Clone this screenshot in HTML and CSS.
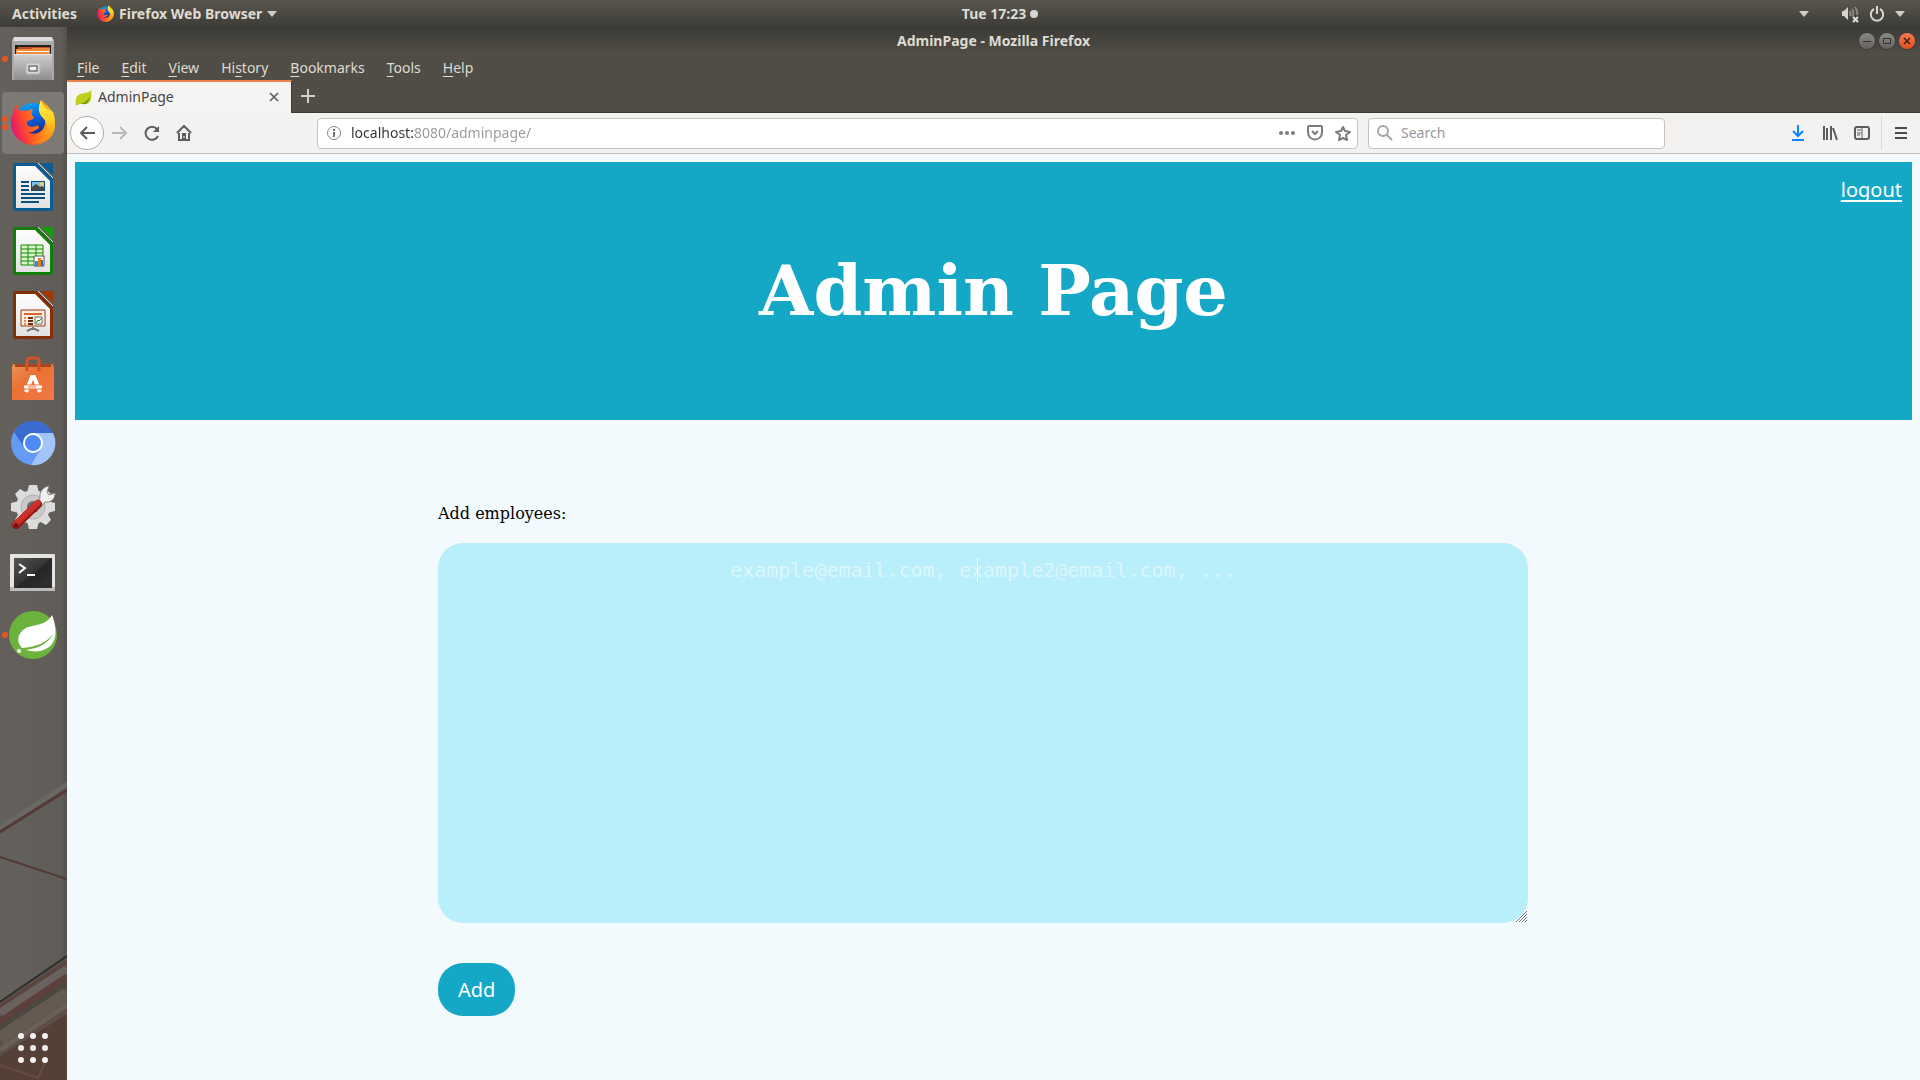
FILE: index.html
```html
<!DOCTYPE html>
<html lang="en">
<head>
<meta charset="utf-8">
<title>AdminPage</title>
<link rel="stylesheet" href="styles.css">
</head>
<body>
<svg class="defs" width="0" height="0" aria-hidden="true">
  <defs>
    <linearGradient id="fox" x1="0" y1="0.6" x2="1" y2="0.3"><stop offset="0" stop-color="#e2156f"/><stop offset="0.3" stop-color="#ff4b2b"/><stop offset="0.65" stop-color="#ff8a16"/><stop offset="1" stop-color="#ffc01f"/></linearGradient>
    <linearGradient id="flame" x1="0.4" y1="0" x2="0.5" y2="1"><stop offset="0" stop-color="#fff44f"/><stop offset="0.5" stop-color="#ffcf1e"/><stop offset="1" stop-color="#ff7a1a"/></linearGradient>
    <linearGradient id="globe" x1="0.3" y1="0" x2="0.6" y2="1"><stop offset="0" stop-color="#0aa5f5"/><stop offset="0.5" stop-color="#0a5fd8"/><stop offset="1" stop-color="#2b1a78"/></linearGradient>
    <linearGradient id="metal" x1="0" y1="0" x2="0" y2="1"><stop offset="0" stop-color="#d0d0d0"/><stop offset="1" stop-color="#8f8f8f"/></linearGradient>
    <linearGradient id="paper" x1="0" y1="0" x2="0" y2="1"><stop offset="0" stop-color="#ffffff"/><stop offset="1" stop-color="#e2e2e2"/></linearGradient>
    <linearGradient id="bag" x1="0" y1="0" x2="1" y2="1"><stop offset="0" stop-color="#e89558"/><stop offset="0.4" stop-color="#ec7034"/><stop offset="1" stop-color="#f07a45"/></linearGradient>
    <linearGradient id="screen" x1="0" y1="0" x2="1" y2="1"><stop offset="0" stop-color="#555"/><stop offset="0.5" stop-color="#333"/><stop offset="0.52" stop-color="#262626"/><stop offset="1" stop-color="#303030"/></linearGradient>
    <linearGradient id="handle" x1="0" y1="0" x2="1" y2="1"><stop offset="0" stop-color="#e84a3c"/><stop offset="1" stop-color="#a81515"/></linearGradient>
    <symbol id="firefox" viewBox="8 7 46 46">
      <circle cx="31" cy="28" r="17" fill="url(#globe)"/>
      <path fill="url(#fox)" d="M15 13c0 3 1 5 3 6 3-1 6-1 8 0 2-2 4-2 5-2-1 2-2 4-1 6l2 3c-2 2-5 2-7 4-1 2 1 4 4 5 3 0 5-2 7-1 2 1 1 3-1 3-3 2-5 4-9 3 4 3 12 2 15-3 4-6 2-12-1-15-4-5-2-11-1-14 6 5 13 10 14 23 1 13-10 22-22 22S9 43 9 31c0-5 1-9 3-12 0-3 1-5 3-6z"/>
      <path fill="url(#flame)" d="M39 8c1 5 4 7 7 10 1-1 3 0 5 2 3 8 3 18-4 25-5 5-12 7-18 6 10-2 17-8 16-16 0-5-2-7-5-10-5-6-3-12-1-17z"/>
    </symbol>
    <symbol id="leaf" viewBox="0 0 18 18"><path fill="#c0cf1d" d="M17 1c1 9 0 15-7 15-3 0-6 0-9 1 0-3-1-6 1-9 3-5 11-2 15-7z"/><path fill="#6e9a1b" d="M1 16c6 1 11-2 15-8-1 6-4 9-8 8-3 0-5 0-7 1z"/></symbol>
  </defs>
</svg>

<header class="topbar">
  <div class="topbar-left">
    <button class="panel-button" type="button">Activities</button>
    <button class="panel-button app-menu" type="button"><svg width="17" height="17"><use href="#firefox"/></svg>Firefox Web Browser<svg width="10" height="6"><path d="M0 0h10L5 6z" fill="#d0cfcc"/></svg></button>
  </div>
  <button class="panel-button clock" type="button">Tue 17:23<span class="clock-dot"></span></button>
  <div class="topbar-right">
    <button class="panel-button" type="button" aria-label="Input menu"><svg width="10" height="6"><path d="M0 0h10L5 6z" fill="#d0cfcc"/></svg></button>
    <button class="panel-button status" type="button" aria-label="System menu">
      <svg width="18" height="18"><path d="M1 6h2l4-4v13l-4-4H1z" fill="#d6d5d1"/><g fill="none" stroke="#8b8983" stroke-width="2"><path d="M9 6q1 3 0 5M11 4q3 5 0 7M14 2q3 4 2 8"/></g><path d="M12 12l5 5m0-5l-5 5" stroke="#e2e1dd" stroke-width="2"/></svg>
      <svg width="16" height="18"><path d="M5 4a6.200 6.200 0 1 0 6 0" fill="none" stroke="#d6d5d1" stroke-width="2"/><path d="M8 1v8" stroke="#d6d5d1" stroke-width="2"/></svg>
      <svg width="10" height="6"><path d="M0 0h10L5 6z" fill="#d0cfcc"/></svg>
    </button>
  </div>
</header>

<nav class="dock" aria-label="Dock">
  <svg class="wallpaper" width="67" height="300" viewBox="0 0 67 300">
    <path d="M0 48L67 4" stroke="#6b6763" stroke-width="5"/>
    <path d="M0 52L67 10" stroke="#55393a" stroke-width="3"/>
    <path d="M0 77l67 22" stroke="#54393a" stroke-width="2"/>
    <path d="M0 224l67-46v122H0z" fill="#5d4e47"/>
    <path d="M0 222l67-46" stroke="#2f2d2b" stroke-width="2"/>
    <path d="M0 226l67-44" stroke="#5b443d" stroke-width="3"/>
    <path d="M0 233l67-44" stroke="#6a625f" stroke-width="8"/>
    <path d="M0 242l67-45" stroke="#5c403b" stroke-width="7"/>
    <path d="M0 248l67-44" stroke="#4a4840" stroke-width="6"/>
    <path d="M0 258l67-44" stroke="#655a51" stroke-width="13"/>
    <path d="M0 270l67-45" stroke="#6a6059" stroke-width="5"/>
    <path d="M0 276l67-42v66H0z" fill="#554037"/>
    <path d="M0 285l38 13 7-16" fill="none" stroke="#694b45" stroke-width="2"/>
  </svg>
  <button class="dock-item" type="button" aria-label="Files"><svg viewBox="0 0 62 62">
    <circle cx="3" cy="31" r="3" fill="#e95420"/>
    <path d="M12 9h38l2 4v38q0 1-1 1H11q-1 0-1-1V13z" fill="#aaa"/><path d="M12 9h38l1 4H11z" fill="#dcdcdc"/>
    <path d="M13 17h36v11H13z" fill="#22201e"/><path d="M16 19h32v8H14z" fill="#c04a20"/><path d="M14 21h16v-1h18v7H14z" fill="#f08b3e"/><path d="M15 23h32v1H15z" fill="#fff"/>
    <path d="M12 26h38v26H12z" fill="url(#metal)"/><path d="M12 26h38v1H12z" fill="#e4e4e4"/>
    <rect x="24" y="35" width="14" height="11" rx="2" fill="#d7d7d7" stroke="#b5b5b5"/><rect x="27" y="38" width="8" height="5" fill="#eee" stroke="#444"/>
  </svg></button>
  <button class="dock-item active" type="button" aria-label="Firefox Web Browser"><svg viewBox="0 0 62 62">
    <circle cx="3" cy="27" r="3" fill="#e95420"/><circle cx="3" cy="35" r="3" fill="#e95420"/>
    <use href="#firefox" x="8" y="7" width="46" height="46"/>
  </svg></button>
  <button class="dock-item" type="button" aria-label="LibreOffice Writer"><svg viewBox="0 0 62 62">
    <path d="M13 7h22l16 16v30q0 2-2 2H13q-2 0-2-2V9q0-2 2-2z" fill="#0a5c93"/><path d="M38 7h13v12z" fill="#0a5c93"/><path d="M14 10h19l15 15v27H14z" fill="url(#paper)"/><path d="M36 7l15 15" stroke="#dfe6ea" stroke-width="1"/>
    <path d="M19 26h8M19 30h8M19 34h8M19 38h24M19 42h24M19 46h18" stroke="#0b4f7d" stroke-width="2"/><path d="M29 25h14v10H29z" fill="#0b4f7d"/><path d="M30 26h12v5H30z" fill="#7cc3ea"/><path d="M30 34v-3l4-3 4 3 2-1 2 2v2z" fill="#4d4a42"/><circle cx="40" cy="28" r="2" fill="#f7d24a"/>
  </svg></button>
  <button class="dock-item" type="button" aria-label="LibreOffice Calc"><svg viewBox="0 0 62 62">
    <path d="M13 7h22l16 16v30q0 2-2 2H13q-2 0-2-2V9q0-2 2-2z" fill="#137d0c"/><path d="M38 7h13v12z" fill="#189b0d"/><path d="M14 10h19l15 15v27H14z" fill="url(#paper)"/><path d="M36 7l15 15" stroke="#dfe6ea" stroke-width="1"/>
    <path d="M19 25h22v20H19z" fill="#d9f7c4"/><path d="M19 25h22v20H19zM26 25v20M34 25v20M19 29h22M19 33h22M19 37h22M19 41h22" fill="none" stroke="#168a0c" stroke-width="1"/>
    <path d="M32 36h10v10H32z" fill="#fff" stroke="#555"/><path d="M33 41h3v5h-3z" fill="#2b8fd0"/><path d="M36 38h3v8h-3z" fill="#e87a1c"/><path d="M39 40h2v6h-2z" fill="#3a6aa0"/>
  </svg></button>
  <button class="dock-item" type="button" aria-label="LibreOffice Impress"><svg viewBox="0 0 62 62">
    <path d="M13 7h22l16 16v30q0 2-2 2H13q-2 0-2-2V9q0-2 2-2z" fill="#833009"/><path d="M38 7h13v12z" fill="#a03a04"/><path d="M14 10h19l15 15v27H14z" fill="url(#paper)"/><path d="M36 7l15 15" stroke="#dfe6ea" stroke-width="1"/>
    <path d="M31 43v3m-6 1l6-3 6 3" stroke="#777" stroke-width="2" fill="none"/><path d="M19 26h24v16H19z" fill="#fbeee2" stroke="#9a3d0c"/><path d="M22 29h18v2H22z" fill="#d8662e"/><path d="M22 34h2m-2 3h2m-2 3h2" stroke="#e08a4e" stroke-width="2"/><path d="M26 34h5m-5 3h5m-5 3h5" stroke="#6d2a08" stroke-width="2"/><path d="M33 33h7v7h-7z" fill="#fff" stroke="#666"/><path d="M34 39l2-3 1 1 3-3" stroke="#18981a" fill="none"/>
  </svg></button>
  <button class="dock-item" type="button" aria-label="Ubuntu Software"><svg viewBox="0 0 62 62">
    <path d="M10 16h42v10H10z" fill="#8e3a1c"/><path d="M10 16l4 0v4zM52 16h-4v4z" fill="#e9763d"/><path d="M10 18l4-2v3h34v-3l4 2v34H10z" fill="url(#bag)"/><path d="M13 16h36v3H13z" fill="#a8441f"/>
    <path d="M25 23V13q0-3 3-3h6q3 0 3 3v10" fill="none" stroke="#cf5529" stroke-width="3"/>
    <path d="M24 44l6-15h2l6 15" fill="none" stroke="#fff" stroke-width="4"/><path d="M22 39h18" stroke="#ec6f34" stroke-width="5"/><path d="M22 39h18" stroke="#fff" stroke-width="3"/><path d="M26 39h8" stroke="#ec6f34" stroke-width="1"/>
  </svg></button>
  <button class="dock-item" type="button" aria-label="Chromium Web Browser"><svg viewBox="0 0 62 62">
    <circle cx="31" cy="31" r="22" fill="#639bf6"/><path d="M12 20a22 22 0 0 1 39 1H31a10 10 0 0 0-9 14z" fill="#3a6bd0"/><path d="M51 21H31l9 14-11 18a22 22 0 0 0 22-32z" fill="#a3c3fb"/><circle cx="31" cy="31" r="10" fill="#fff"/><circle cx="31" cy="31" r="8" fill="#4c8bf5"/>
  </svg></button>
  <button class="dock-item" type="button" aria-label="Settings"><svg viewBox="0 0 62 62">
    <g fill="#dcdcdc"><circle cx="31" cy="31" r="17"/><path d="M27 9h8l2 8H25zM27 53h8l2-8H25z"/><path d="M9 27v8l8 2V25zM53 27v8l-8 2V25z"/><path d="M13 18l5-5 7 4-8 8zM44 13l5 5-4 7-8-8zM13 44l5 5 7-4-8-8zM44 49l5-5-4-7-8 8z"/></g>
    <circle cx="31" cy="31" r="12" fill="#c9c9c9" stroke="#b0b0b0"/><circle cx="31" cy="31" r="6" fill="#6c6a66"/>
    <path d="M34 29l4-7c-1-6 3-11 9-12l-2 6 2 3 6-2c0 6-4 10-10 9l-6 7z" fill="#f0f0ee" stroke="#888" stroke-width="1"/>
    <path d="M36 28L14 49" stroke="#8f1212" stroke-width="8" stroke-linecap="round"/><path d="M36 27L14 48" stroke="url(#handle)" stroke-width="6" stroke-linecap="round"/><circle cx="14" cy="49" r="2" fill="#6b1010"/>
  </svg></button>
  <button class="dock-item" type="button" aria-label="Terminal"><svg viewBox="0 0 62 62">
    <rect x="8" y="14" width="45" height="37" rx="1" fill="#e4e4e2"/><path d="M8 47h45v3q0 1-1 1H9q-1 0-1-1z" fill="#bcbcba"/><rect x="12" y="18" width="38" height="30" fill="url(#screen)"/><path d="M17 24l6 4-6 5" fill="none" stroke="#fff" stroke-width="2"/><path d="M25 35h8" stroke="#fff" stroke-width="2"/>
  </svg></button>
  <button class="dock-item" type="button" aria-label="Spring Tool Suite"><svg viewBox="0 0 62 62">
    <circle cx="3" cy="31" r="3" fill="#e95420"/><circle cx="31" cy="31" r="24" fill="#6cb33e"/>
    <path d="M50 11c7 18 4 33-12 36-6 1-10 0-14-1 14-2 22-7 27-16-6 8-16 13-31 14-6-6-5-15 4-20 9-4 20-2 26-13z" fill="#fff"/><circle cx="17" cy="47" r="2" fill="#fff"/>
  </svg></button>
  <button class="dock-item apps" type="button" aria-label="Show Applications"><svg viewBox="0 0 62 62"><g fill="#f2f1ef"><circle cx="19" cy="19" r="3"/><circle cx="31" cy="19" r="3"/><circle cx="43" cy="19" r="3"/><circle cx="19" cy="31" r="3"/><circle cx="31" cy="31" r="3"/><circle cx="43" cy="31" r="3"/><circle cx="19" cy="43" r="3"/><circle cx="31" cy="43" r="3"/><circle cx="43" cy="43" r="3"/></g></svg></button>
</nav>

<section class="window">
  <div class="titlebar">
    <div class="window-title">AdminPage - Mozilla Firefox</div>
    <div class="window-buttons">
      <button type="button" aria-label="Minimize"><svg width="16" height="16"><path d="M4 8.500h8" stroke="#33322e"/></svg></button>
      <button type="button" aria-label="Maximize"><svg width="16" height="16"><path d="M4.500 5.500h7v5h-7z" fill="none" stroke="#33322e"/></svg></button>
      <button class="close" type="button" aria-label="Close"><svg width="16" height="16"><path d="M5 5l6 6m0-6l-6 6" stroke="#3d2015" stroke-width="1.500"/></svg></button>
    </div>
  </div>
  <div class="menubar">
    <button type="button"><u>F</u>ile</button><button type="button"><u>E</u>dit</button><button type="button"><u>V</u>iew</button><button type="button">Hi<u>s</u>tory</button><button type="button"><u>B</u>ookmarks</button><button type="button"><u>T</u>ools</button><button type="button"><u>H</u>elp</button>
  </div>
  <div class="tabstrip">
    <div class="tab">
      <svg width="17" height="17"><use href="#leaf"/></svg><span class="tab-label">AdminPage</span>
      <button type="button" aria-label="Close tab"><svg width="12" height="12"><path d="M2 2l8 8m0-8l-8 8" stroke="#5a5a58" stroke-width="1.600"/></svg></button>
    </div>
    <button class="new-tab" type="button" aria-label="New tab"><svg width="14" height="14"><path d="M7 0v14M0 7h14" stroke="#d0cec9" stroke-width="2"/></svg></button>
  </div>
  <div class="toolbar">
    <button class="tool back" type="button" aria-label="Back"><svg width="16" height="16"><path d="M16 8H2m6-6L2 8l6 6" fill="none" stroke="#5c5c5a" stroke-width="2"/></svg></button>
    <button class="tool" type="button" aria-label="Forward" disabled><svg width="16" height="16"><path d="M0 8h14M8 2l6 6-6 6" fill="none" stroke="#b9b8b6" stroke-width="2"/></svg></button>
    <button class="tool" type="button" aria-label="Reload"><svg width="16" height="16"><path d="M13 4a6.500 6.500 0 1 0 1 7" fill="none" stroke="#5c5c5a" stroke-width="2"/><path d="M15 1v6H9z" fill="#5c5c5a"/></svg></button>
    <button class="tool" type="button" aria-label="Home"><svg width="16" height="16"><path d="M1 8l7-7 7 7M3 8v7h10V8" fill="none" stroke="#5c5c5a" stroke-width="2"/><path d="M6 8h4v7H6z" fill="#5c5c5a"/><path d="M8 11v2" stroke="#fff"/></svg></button>
    <div class="spacer"></div>
    <div class="field urlbar">
      <svg width="16" height="16"><circle cx="8" cy="8" r="6.500" fill="none" stroke="#858583"/><path d="M8 7v5M8 4v2" stroke="#757573" stroke-width="2"/></svg>
      <input type="text" value="localhost:8080/adminpage/" aria-label="Address">
      <button type="button" aria-label="Page actions"><svg width="16" height="16"><circle cx="2" cy="8" r="2" fill="#7c7c7a"/><circle cx="8" cy="8" r="2" fill="#7c7c7a"/><circle cx="14" cy="8" r="2" fill="#7c7c7a"/></svg></button>
      <button type="button" aria-label="Save to Pocket"><svg width="16" height="16"><path d="M2 1h12q1 0 1 1v5c0 10-14 10-14 0V2q0-1 1-1z" fill="none" stroke="#7c7c7a" stroke-width="2"/><path d="M5 6l3 3 3-3" fill="none" stroke="#7c7c7a" stroke-width="2"/></svg></button>
      <button type="button" aria-label="Bookmark this page"><svg width="16" height="16"><path d="M8 2l2 4 5 1-4 3 1 5-4-2-4 2 1-5-4-3 5-1z" fill="none" stroke="#7c7c7a" stroke-width="2" stroke-linejoin="round"/></svg></button>
    </div>
    <div class="field searchbar">
      <svg width="16" height="16"><circle cx="6" cy="6" r="5" fill="none" stroke="#a4a4a2" stroke-width="2"/><path d="M10 10l5 5" stroke="#a4a4a2" stroke-width="2"/></svg>
      <input type="search" placeholder="Search" aria-label="Search">
    </div>
    <div class="spacer"></div>
    <button class="tool" type="button" aria-label="Downloads"><svg width="16" height="16"><path d="M8 0v11M3 6l5 5 5-5M2 15h12" fill="none" stroke="#0a84ff" stroke-width="2"/></svg></button>
    <button class="tool" type="button" aria-label="Library"><svg width="16" height="16"><path d="M2 1v14M5 3v12M9 1v14M11 3l4 12" fill="none" stroke="#5c5c5a" stroke-width="2"/></svg></button>
    <button class="tool" type="button" aria-label="Sidebars"><svg width="16" height="16"><rect x="1" y="2" width="14" height="12" rx="2" fill="none" stroke="#5c5c5a" stroke-width="2"/><path d="M8 2v12M3 5h4M3 8h4M3 10h3" stroke="#5c5c5a"/></svg></button>
    <button class="tool menu" type="button" aria-label="Open menu"><svg width="12" height="14"><path d="M0 2h12M0 7h12M0 12h12" stroke="#4c4c4a" stroke-width="2"/></svg></button>
  </div>

  <main class="page">
    <div class="banner">
      <a class="logout" href="#">logout</a>
      <h1>Admin Page</h1>
    </div>
    <form class="employee-form">
      <label for="emails">Add employees:</label>
      <div class="emails-box">
        <textarea id="emails" placeholder="example@email.com, example2@email.com, ..."></textarea>
        <span class="caret"></span>
        <svg class="grip" width="11" height="11"><path d="M0 11L11 0M3 11l8-8M6 11l5-5M9 11l2-2" stroke="#6f7678"/></svg>
      </div>
      <button class="add" type="button">Add</button>
    </form>
  </main>
</section>
</body>
</html>
```
FILE: styles.css
```css
* { box-sizing: border-box; }

body {
  margin: 0;
  min-height: 100vh;
  display: grid;
  grid-template: 27px 1fr / 67px 1fr;
  font: 14px/20px "Noto Sans", sans-serif;
  color: #dfdbd2;
  background: #f2fafd;
}

button {
  border: 0;
  padding: 0;
  background: none;
  font: inherit;
  color: inherit;
}

svg { display: block; flex: none; }
.defs { position: absolute; }

/* Desktop panel */
.topbar {
  grid-column: 1 / 3;
  display: grid;
  grid-template-columns: 1fr auto 1fr;
  align-items: center;
  background: linear-gradient(#5a564d, #3d3c38);
  font-size: 14px;
  font-weight: 700;
}
.topbar-left, .topbar-right, .panel-button { display: flex; align-items: center; }
.topbar-left { padding-left: 12px; gap: 20px; }
.topbar-right { justify-content: flex-end; padding-right: 15px; gap: 32px; }
.app-menu { gap: 5px; }
.clock { gap: 4px; padding-left: 80px; }
.clock-dot { width: 8px; height: 8px; border-radius: 50%; background: #d6d5d1; }
.status { gap: 10px; }

/* Launcher */
.dock {
  position: relative;
  display: flex;
  flex-direction: column;
  gap: 2px;
  padding: 1px 2px;
  background: linear-gradient(90deg, #64615c, #605d58 90%, #55524e);
}
.wallpaper { position: absolute; left: 0; bottom: 0; }
.dock-item { position: relative; width: 62px; height: 62px; border-radius: 4px; }
.dock-item.active { background: #7d7a76; }
.dock-item.apps { margin-top: auto; }

/* Browser window */
.window { display: flex; flex-direction: column; min-width: 0; background: #504d46; }
.titlebar {
  display: grid;
  grid-template-columns: 1fr auto 1fr;
  align-items: center;
  height: 27px;
  background: linear-gradient(#3b3a36, #504d46);
  font-weight: 700;
}
.window-title { grid-column: 2; }
.window-buttons { display: flex; justify-content: flex-end; gap: 4px; padding-right: 5px; }
.window-buttons button {
  width: 16px;
  height: 16px;
  border-radius: 50%;
  background: linear-gradient(#8a8882, #64625c);
  box-shadow: 0 0 0 1px #3c3b37;
}
.window-buttons .close { background: linear-gradient(#f47b54, #e2501f); }

.menubar { display: flex; gap: 2px; height: 26px; align-items: center; }
.menubar button { padding: 2px 10px 0; }
.menubar u { text-underline-offset: 3px; }

.tabstrip { display: flex; height: 33px; border-bottom: 1px solid #3a3935; }
.tab {
  display: flex;
  align-items: center;
  gap: 6px;
  width: 225px;
  height: 33px;
  padding: 0 11px 1px 8px;
  border-top: 2px solid #f0804e;
  border-right: 1px solid #3a3935;
  background: #f5f4f2;
  color: #444;
}
.tab-label { flex: 1; }
.new-tab { padding: 0 9px; }

.toolbar {
  display: flex;
  align-items: center;
  height: 41px;
  padding: 0 4px 0 3px;
  border-bottom: 1px solid #c4c3c1;
  background: #f4f2f1;
}
.tool { display: grid; place-items: center; width: 32px; height: 34px; }
.tool.back { width: 34px; border: 1px solid #b0afad; border-radius: 50%; background: #fdfdfd; }
.tool.menu { width: 35px; margin-left: 3px; padding-left: 4px; border-left: 1px solid #dbdad8; }
.spacer { flex: 117; }
.field {
  display: flex;
  align-items: center;
  height: 31px;
  border: 1px solid #c6c3bf;
  border-radius: 4px;
  background: #fff;
}
.field input {
  flex: 1;
  min-width: 0;
  border: 0;
  outline: 0;
  padding: 0;
  background: none;
  font: inherit;
  color: #444;
}
.field input::placeholder { color: #999; opacity: 1; }
.urlbar { flex: 1025; gap: 12px; padding: 0 6px 0 8px; }
.urlbar > svg { margin-right: -3px; }
.urlbar input {
  background: linear-gradient(90deg, #333 64px, #999 64px);
  background-clip: text;
  color: transparent;
}
.searchbar { flex: 279; gap: 8px; margin-left: 10px; padding: 0 8px; }

/* Admin page */
.page { flex: 1; padding: 8px; background: #f2fafd; color: #000; }
.banner {
  display: flex;
  flex-direction: column;
  height: 258px;
  padding: 10px;
  background: #15a8c6;
  color: #fff;
}
.logout {
  align-self: flex-end;
  font-size: 20px;
  line-height: 36px;
  color: #fff;
  text-decoration-thickness: 2px;
  text-underline-offset: 3px;
  text-decoration-skip-ink: none;
}
h1 {
  margin: 42px 0 0;
  font: bold 70px/82px "DejaVu Serif", serif;
  text-align: center;
}
.employee-form {
  display: flex;
  flex-direction: column;
  align-items: flex-start;
  width: 61%;
  max-width: 1111px;
  margin: 84px auto 0;
}
.employee-form label { font: 16px/20px "DejaVu Serif", serif; }
.emails-box { position: relative; align-self: stretch; margin: 19px 21px 40px 0; }
textarea {
  display: block;
  width: 100%;
  height: 380px;
  padding: 15px 20px;
  border: 0;
  border-radius: 25px;
  outline: 0;
  resize: none;
  background: #b9effa;
  font: 20px/24px "DejaVu Sans Mono", monospace;
  text-align: center;
}
textarea::placeholder { color: #dcf7fc; opacity: 1; }
.caret { position: absolute; top: 15px; left: calc(50% - 6px); width: 1px; height: 24px; background: #fff; }
.grip { position: absolute; right: 1px; bottom: 1px; }
.add {
  height: 53px;
  padding: 0 20px;
  border-radius: 25px;
  background: #15a8c6;
  color: #fff;
  font-size: 20px;
}
```
